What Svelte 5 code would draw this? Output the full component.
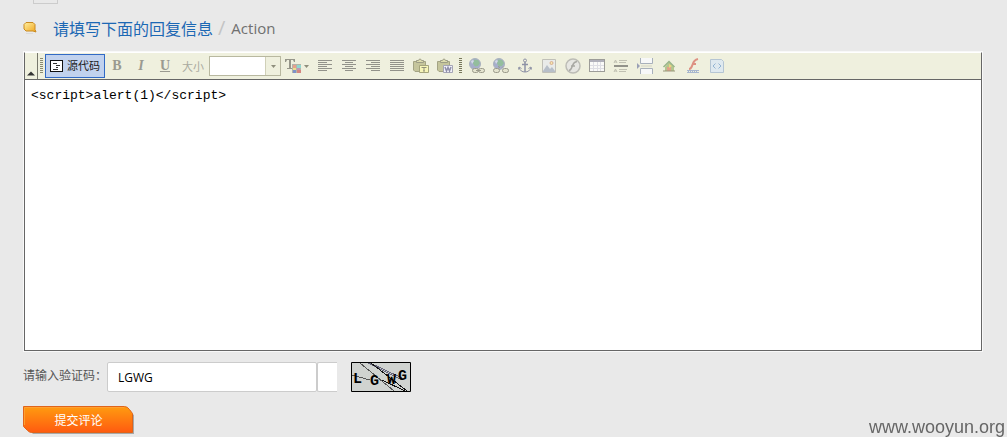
<script>
  let source = $state('<script>alert(1)<' + '/script>');
  let code = $state('LGWG');
  let sourceMode = $state(true);

  const aligns = [
    { name: '左对齐', rows: [[0, 14], [0, 9], [0, 14], [0, 9], [0, 14], [0, 9]] },
    { name: '居中', rows: [[0, 14], [3, 8], [0, 14], [3, 8], [0, 14], [3, 8]] },
    { name: '右对齐', rows: [[0, 14], [5, 9], [0, 14], [5, 9], [0, 14], [5, 9]] },
    { name: '两端对齐', rows: [[0, 14], [0, 14], [0, 14], [0, 14], [0, 14], [0, 14]] }
  ];
</script>

<main>
  <div class="tab-end"></div>

  <h2>
    <svg class="bubble" width="14" height="14" viewBox="0 0 14 14">
      <defs>
        <linearGradient id="gold" x1="0" y1="0" x2="1" y2="1">
          <stop offset="0" stop-color="#fff0a0" />
          <stop offset="1" stop-color="#f0a41c" />
        </linearGradient>
      </defs>
      <path d="M3 1.5h7l2 2v5l1 2.500-3-1H3l-2-2V3.500z" fill="url(#gold)" stroke="#c98a20" />
      <path d="M3 12.500h7" stroke="#dadada" />
    </svg>
    <span class="title">请填写下面的回复信息</span>
    <span class="slash">/</span>
    <span class="sub">Action</span>
  </h2>

  <form onsubmit={(e) => e.preventDefault()}>
    <div class="editor">
      <div class="toolbar">
        <button type="button" class="collapse" aria-label="收起工具栏">
          <svg width="10" height="5" viewBox="0 0 10 5"><path d="M1 4.500 5 .500l4 4z" fill="#333" /></svg>
        </button>
        <span class="grip"></span>
        <button type="button" class="source" class:on={sourceMode} onclick={() => (sourceMode = !sourceMode)}>
          <svg width="14" height="12" viewBox="0 0 14 12" shape-rendering="crispEdges">
            <rect x=".5" y=".5" width="13" height="11" fill="#fff" stroke="#000" />
            <path d="M3 3.500h5M6 5.500h5M6 7.500h3M3 9.500h6" stroke="#222" />
          </svg>
          <span>源代码</span>
        </button>
        <button type="button" class="tool letter bold" disabled>B</button>
        <button type="button" class="tool letter italic" disabled>I</button>
        <button type="button" class="tool letter under" disabled>U</button>
        <label for="size">大小</label>
        <div class="combo">
          <select id="size" disabled><option></option></select>
          <span class="arrow"><svg width="5" height="3" viewBox="0 0 5 3"><path d="M0 0h5L2.500 3z" fill="#8e8e7c" /></svg></span>
        </div>
        <button type="button" class="tool color" aria-label="文本颜色" disabled>
          <svg width="24" height="16" viewBox="0 0 24 16">
            <path d="M0 1h10v3H9L8 2H6v8h2v1H2v-1h2V2H2L1 4H0z" fill="#96968a" />
            <path d="M7 6h9v9H7z" fill="#b4b4a8" />
            <path d="M8 7h3v3H8z" fill="#e8a08c" /><path d="M12 7h4v3h-4z" fill="#8fd8d0" />
            <path d="M8 10h3v2H8z" fill="#ece08c" /><path d="M12 10h3v2h-3z" fill="#c596b0" />
            <path d="M8 12h3v3H8z" fill="#7e92c8" /><path d="M12 12h4v3h-4z" fill="#d48580" />
            <path d="M19 7h5l-2.500 3z" fill="#8e8e7c" />
          </svg>
        </button>

        {#each aligns as align}
          <button type="button" class="tool" aria-label={align.name} disabled>
            <svg width="16" height="16" viewBox="0 0 16 16" shape-rendering="crispEdges">
              {#each align.rows as [x, w], i}
                <rect x={x + 1} y={2 + i * 2} width={w} height="1" fill="#92928a" />
              {/each}
            </svg>
          </button>
        {/each}

        {#each ['T', 'W'] as kind}
          <button type="button" class="tool" aria-label="粘贴 {kind}" disabled>
            <svg width="16" height="16" viewBox="0 0 16 16">
              <path d="M.5 3.500h12v10H2l-1.500-1.500z" fill="#c5c59c" stroke="#a4a484" />
              <path d="M3.500 4.500v-2h2l1-1.500h1l1 1.500h2v2z" fill="#dddcae" stroke="#9d9d86" />
              <path d="M6.500 7.500h9v7h-9z" fill={kind === 'T' ? '#f6f5b8' : '#f2f2fa'} stroke={kind === 'T' ? '#a5a57c' : '#a5a5b6'} />
              {#if kind === 'T'}
                <path d="M8.500 9.500h5M11 9v4M10 13h2" stroke="#92927c" />
              {:else}
                <path d="M8 9l1.500 4L11 9.500l1.500 3.500L14 9" fill="none" stroke="#8f8faa" stroke-width="1.500" />
              {/if}
            </svg>
          </button>
        {/each}
        <span class="grip second"></span>

        {#each ['超链接', '取消超链接'] as name, i}
          <button type="button" class="tool" aria-label={name} disabled>
            <svg width="16" height="16" viewBox="0 0 16 16">
              <circle cx="6" cy="6" r="5.500" fill="#a6aecb" stroke="#aab2bd" />
              <path d="M5 1.500l4 .5 2 3-2 3-3 .5-2-3z" fill="#93bd9d" />
              <path d="M2 3l2-1 1 1-2 3z" fill="#d4dae8" />
              <g fill="#e4e4cf" stroke="#9a9a8a">
                <rect x={i ? 0.5 : 3.5} y="10.500" width="6" height="4" rx="2" />
                <rect x="9.500" y="10.500" width="6" height="4" rx="2" />
                {#if !i}<path d="M7 12.500h5" />{:else}<path d="M5 8.500l2 1M10 8.500l-1 1" />{/if}
              </g>
            </svg>
          </button>
        {/each}
        <button type="button" class="tool" aria-label="锚点" disabled>
          <svg width="16" height="16" viewBox="0 0 16 16" fill="none" stroke="#8e92a6">
            <circle cx="8" cy="2.500" r="1.500" />
            <path d="M8 4v10M5 6.500h6" stroke-width="1.500" />
            <path d="M2 9.500c1 3 3 4.500 6 4.500s5-1.500 6-4.500M1.500 11.500l.5-2.500 2.500 1.500M14.500 11.500l-.5-2.500-2.500 1.500" />
          </svg>
        </button>
        <button type="button" class="tool" aria-label="图象" disabled>
          <svg width="16" height="16" viewBox="0 0 16 16">
            <path d="M1.500 1.500h13v13h-13z" fill="#e9ebe9" stroke="#c0c0b8" />
            <path d="M2 13l4-6 3 4 2-2 3 4v1H2z" fill="#b7bfc9" />
            <circle cx="10.500" cy="5" r="1.500" fill="#f5e8ae" stroke="#d9ad8f" />
          </svg>
        </button>
        <button type="button" class="tool" aria-label="Flash" disabled>
          <svg width="16" height="16" viewBox="0 0 16 16" fill="none">
            <circle cx="8" cy="8" r="7" fill="#e6e6e2" stroke="#bcbcb6" stroke-width="1.500" />
            <path d="M12 3.500C8 4 8 7 7 9s-1 3-3 3.500M6 8h4" stroke="#a8a8a3" stroke-width="1.500" />
          </svg>
        </button>
        <button type="button" class="tool" aria-label="表格" disabled>
          <svg width="16" height="16" viewBox="0 0 16 16" shape-rendering="crispEdges">
            <path d="M.5 1.500h15v12H.5z" fill="#fafaf8" stroke="#9c9c98" />
            <path d="M1 2h14v2H1z" fill="#b0b0ba" />
            <path d="M4.500 4v9M8.500 4v9M11.500 4v9M1 7.500h14M1 10.500h14" stroke="#dedee4" />
          </svg>
        </button>
        <button type="button" class="tool" aria-label="水平线" disabled>
          <svg width="16" height="16" viewBox="0 0 16 16" fill="none" stroke="#c0c0b2">
            <path d="M1 5l1.500-3L4 5M1.500 4h2M1 14l1.500-3L4 14M1.500 13h2M6 2.500h8M6 4.500h7M6 11.500h8M6 13.500h7" />
            <path d="M1 8h14" stroke="#92928a" stroke-width="2" />
          </svg>
        </button>
        <button type="button" class="tool" aria-label="分页符" disabled>
          <svg width="16" height="16" viewBox="0 0 16 16">
            <path d="M3.500 0v5.500h12V0" fill="#f7f8f8" stroke="#a8b0bb" />
            <path d="M3.500 16v-5.500h12V16" fill="#f7f8f8" stroke="#a8b0bb" />
            <path d="M0 5l3 3-3 3z" fill="#9aa0b5" />
            <path d="M4 8h11" stroke="#d2d2c6" />
          </svg>
        </button>
        <button type="button" class="tool" aria-label="插入图片" disabled>
          <svg width="16" height="16" viewBox="0 0 16 16">
            <path d="M4 9l4-5 5 5v4H4z" fill="#b4c68e" />
            <path d="M2.500 9L8 3.500 13.500 9" fill="none" stroke="#98b488" stroke-width="1.500" />
            <path d="M6 9h4v4H6z" fill="#e2a18a" />
            <path d="M8 6l3 2-3 2z" fill="#ecd681" />
            <path d="M2 13h12" stroke="#99957b" />
          </svg>
        </button>
        <button type="button" class="tool" aria-label="插入视频" disabled>
          <svg width="16" height="16" viewBox="0 0 16 16" fill="none">
            <path d="M13 1C8 2 8 6 7 8s-1 3-3 3M7 6h4" stroke="#dd9183" stroke-width="2" />
            <path d="M2 12.500h12M2 14.500h12" stroke="#a7b6ce" />
            <path d="M3 13.500h10" stroke="#a7b6ce" stroke-dasharray="1 1" />
          </svg>
        </button>
        <button type="button" class="tool" aria-label="插入代码" disabled>
          <svg width="16" height="16" viewBox="0 0 16 16">
            <path d="M1.500 1.500h11l2 2v11h-13z" fill="#dfe9ef" stroke="#b5c5d3" />
            <path d="M6.500 5.500L4 8l2.500 2.500M9.500 5.500L12 8l-2.500 2.500" fill="none" stroke="#93b4d2" />
          </svg>
        </button>
      </div>
      <textarea bind:value={source} spellcheck="false" aria-label="回复内容"></textarea>
    </div>

    <div class="verify">
      <label for="code">请输入验证码：</label>
      <input id="code" type="text" bind:value={code} />
      <span class="stub"></span>
      <svg class="captcha" width="60" height="30" viewBox="0 0 60 30">
        <path d="M.5.5h59v29H.5z" fill="#d0d3d0" stroke="#000" />
        <g fill="none" stroke="#555" stroke-width="1" shape-rendering="crispEdges">
          <path d="M9 1l34 28M1 13l18 5" />
          <path d="M17 1l34 17M19 1l32 15" stroke="#66667c" />
          <path d="M20 1l36 28M31 18l23 11" stroke="#111" />
        </g>
        <text x="2" y="21">L</text>
        <text x="19" y="23">G</text>
        <text x="36" y="22">W</text>
        <text x="47" y="18">G</text>
      </svg>
    </div>

    <button type="submit" class="submit">
      <svg viewBox="0 0 111 29" width="111" height="29">
        <defs>
          <linearGradient id="orange" x1="0" y1="0" x2="0" y2="1">
            <stop offset="0" stop-color="#ff9c10" />
            <stop offset="1" stop-color="#ff5a10" />
          </linearGradient>
        </defs>
        <path d="M3 3h100l8 6v19H10l-7-7z" fill="#a8a8a8" />
        <path d="M.5.5h101q3 0 5 3l3 4v19H8.500q-2 0-4-2l-4-4z" fill="url(#orange)" stroke="#e0641a" />
        <path d="M1.500 19V1.500H101" fill="none" stroke="#ffa030" />
      </svg>
      <span>提交评论</span>
    </button>
  </form>

  <div class="watermark">www.wooyun.org</div>
</main>

<style>
  :global(body) {
    margin: 0;
    background: #e9e9e9;
  }

  main {
    padding: 0 25px 0 23px;
    font-family: "Liberation Sans", "Noto Sans CJK SC", sans-serif;
    font-size: 12px;
    color: #555;
  }

  .tab-end {
    box-sizing: border-box;
    width: 25px;
    height: 4px;
    margin-left: 10px;
    border: 1px solid #ccc;
    border-top: 0;
  }

  h2 {
    display: flex;
    align-items: center;
    height: 48px;
    margin: 0;
    font-size: 16px;
    font-weight: 400;
    line-height: 24px;
  }

  .bubble {
    margin-right: 16px;
  }

  .title {
    color: #1c68b4;
    font-family: "Noto Sans CJK SC", sans-serif;
  }

  .slash {
    margin: 0 6px 0 5px;
    color: #c4c4c4;
    font-family: "Open Sans", sans-serif;
    font-size: 20px;
  }

  .sub {
    color: #707070;
    font-family: "Open Sans", sans-serif;
    font-size: 15px;
  }

  button {
    padding: 0;
    border: 0;
    background: none;
    font-family: inherit;
  }

  .editor {
    margin-left: 1px;
    border: 1px solid #666;
    border-top-color: #fff;
    outline: 1px solid #f8f8f8;
    background: #fff;
  }

  .toolbar {
    display: flex;
    align-items: center;
    height: 26px;
    border-bottom: 1px solid #666;
    background: #eff0de;
    overflow: hidden;
  }

  .collapse {
    display: flex;
    align-self: stretch;
    align-items: flex-end;
    justify-content: center;
    box-sizing: border-box;
    width: 13px;
    padding-bottom: 3px;
    border-right: 1px solid #77776c;
    flex: none;
  }

  .grip {
    flex: none;
    width: 3px;
    height: 16px;
    margin: 0 2px;
    background: repeating-linear-gradient(#8a8a70 0 1px, #eff0de 1px 2px);
  }

  .second {
    margin: 0 3px 0 2px;
    background: repeating-linear-gradient(#77775c 0 1px, #eff0de 1px 2px);
  }

  .source {
    display: flex;
    align-items: center;
    gap: 4px;
    box-sizing: border-box;
    flex: none;
    width: 60px;
    height: 24px;
    padding: 0 4px;
    border: 1px solid transparent;
    color: #222;
    font-size: 11px;
    line-height: 16px;
    white-space: nowrap;
  }

  .on {
    border-color: #316ac5;
    background: #c1d2ee;
  }

  .tool {
    display: flex;
    align-items: center;
    justify-content: center;
    flex: none;
    width: 24px;
    height: 24px;
  }

  .letter {
    color: #9a9a90;
    font-family: "Liberation Serif", serif;
    font-size: 14px;
    font-weight: 700;
  }

  .italic {
    font-style: italic;
  }

  .under {
    text-decoration: underline;
  }

  .toolbar label {
    width: 27px;
    padding-left: 5px;
    color: #aaaa9f;
    font-size: 11px;
    flex: none;
  }

  .combo {
    display: flex;
    box-sizing: border-box;
    flex: none;
    width: 72px;
    height: 20px;
    border: 1px solid #b8b8a0;
    background: #fff;
  }

  select {
    appearance: none;
    flex: 1;
    min-width: 0;
    padding: 0;
    border: 0;
    background: #fff;
  }

  .arrow {
    display: flex;
    align-items: center;
    justify-content: center;
    width: 14px;
    border-left: 1px solid #d0d0b8;
    background: #eff0de;
  }

  .color {
    width: 32px;
  }

  textarea {
    display: block;
    box-sizing: border-box;
    width: 100%;
    height: 270px;
    padding: 8px 6px;
    border: 0;
    outline: 0;
    resize: none;
    background: #fff;
    color: #000;
    font-family: "Liberation Mono", monospace;
    font-size: 13px;
    line-height: 16px;
  }

  .verify {
    display: flex;
    align-items: flex-start;
    margin-top: 11px;
  }

  .verify label {
    width: 84px;
    line-height: 28px;
    white-space: nowrap;
  }

  input {
    box-sizing: border-box;
    width: 210px;
    height: 30px;
    padding: 0 10px;
    border: 1px solid #ccc;
    border-radius: 2px;
    outline: 0;
    background: #fff;
    color: #000;
    font-family: "Open Sans", sans-serif;
    font-size: 12px;
  }

  .stub {
    box-sizing: border-box;
    width: 20px;
    height: 30px;
    border: 1px solid #ccc;
    border-right: 0;
    border-radius: 2px 0 0 2px;
    background: #fff;
  }

  .captcha {
    margin-left: 14px;
  }

  .captcha text {
    fill: #000;
    font-family: "Liberation Mono", monospace;
    font-size: 15px;
    font-weight: 700;
  }

  .submit {
    display: grid;
    place-items: center;
    margin-top: 14px;
    color: #fff;
    font-size: 12px;
    line-height: 18px;
  }

  .submit svg,
  .submit span {
    grid-area: 1 / 1;
  }

  .watermark {
    position: fixed;
    right: 2px;
    bottom: 0;
    color: #666;
    font-size: 18px;
    line-height: 20px;
  }
</style>
